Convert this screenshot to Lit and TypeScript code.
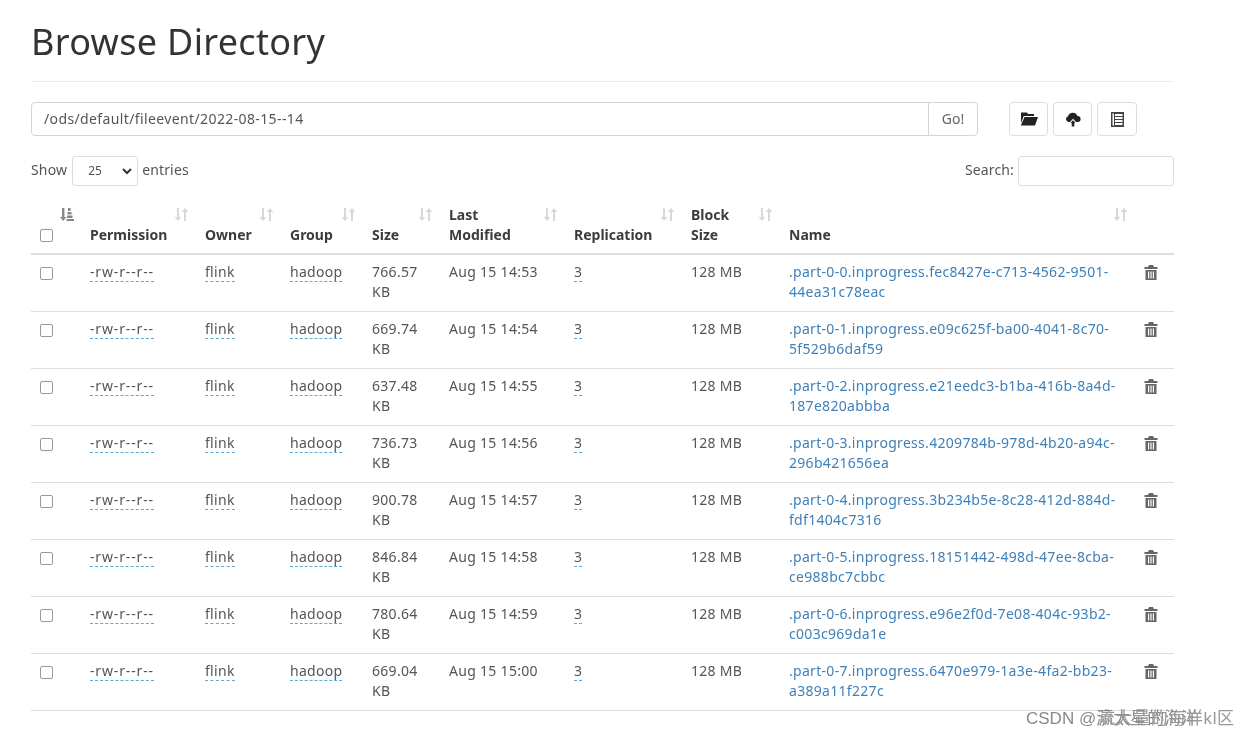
import { LitElement, html, css, svg } from "lit";
import { customElement } from "lit/decorators.js";

const rows = [
  ["766.57", "14:53", ".part-0-0.inprogress.fec8427e-c713-4562-9501-", "44ea31c78eac"],
  ["669.74", "14:54", ".part-0-1.inprogress.e09c625f-ba00-4041-8c70-", "5f529b6daf59"],
  ["637.48", "14:55", ".part-0-2.inprogress.e21eedc3-b1ba-416b-8a4d-", "187e820abbba"],
  ["736.73", "14:56", ".part-0-3.inprogress.4209784b-978d-4b20-a94c-", "296b421656ea"],
  ["900.78", "14:57", ".part-0-4.inprogress.3b234b5e-8c28-412d-884d-", "fdf1404c7316"],
  ["846.84", "14:58", ".part-0-5.inprogress.18151442-498d-47ee-8cba-", "ce988bc7cbbc"],
  ["780.64", "14:59", ".part-0-6.inprogress.e96e2f0d-7e08-404c-93b2-", "c003c969da1e"],
  ["669.04", "15:00", ".part-0-7.inprogress.6470e979-1a3e-4fa2-bb23-", "a389a11f227c"],
];

const sortIcon = svg`<path d="M3 0h2v9h2.400L4 13 .6 9H3zM10 13h2V4h2.400L11 0 7.600 4H10z"/>`;
const sortedIcon = svg`<path d="M3 0h2.400v9h2L4.200 13 1 9h2zM9 0h2.500v3H9zM8.500 4h4v2.500h-4zM8 7.500h5.500V10H8zM7.500 11H15v2H7.500z"/>`;

@customElement("app-root")
export class AppRoot extends LitElement {
  static styles = css`
    :host {
      display: block;
      position: relative;
      height: 737px;
      overflow: hidden;
      box-sizing: border-box;
      padding: 0 78px 0 31px;
      background: #fff;
      color: #555;
      font: 14px/20px "Noto Sans", "Open Sans", sans-serif;
      filter: blur(0.35px);
    }
    h1 {
      margin: 0;
      padding: 22px 0 19px;
      height: 40px;
      box-sizing: content-box;
      border-bottom: 1px solid #eee;
      font-size: 36px;
      line-height: 40px;
      font-weight: 400;
      letter-spacing: 0.32px;
      color: #333;
    }
    .path-row {
      display: flex;
      margin-top: 20px;
      height: 34px;
    }
    .path {
      flex: 1;
      box-sizing: border-box;
      border: 1px solid #d4d4d4;
      border-radius: 4px 0 0 4px;
      padding: 6px 12px;
      letter-spacing: 0.38px;
      color: #555;
    }
    .go {
      width: 50px;
      box-sizing: border-box;
      margin-left: -1px;
      border: 1px solid #d4d4d4;
      border-radius: 0 4px 4px 0;
      text-align: center;
      line-height: 32px;
      color: #666;
    }
    .tools {
      display: flex;
      gap: 5px;
      margin: 0 37px 0 31px;
    }
    .tool {
      display: flex;
      align-items: center;
      justify-content: center;
      width: 39px;
      box-sizing: border-box;
      border: 1px solid #ddd;
      border-radius: 4px;
    }
    .tool:last-child {
      width: 40px;
    }
    .tool svg {
      fill: #222;
    }
    .controls {
      display: flex;
      justify-content: space-between;
      align-items: center;
      margin-top: 20px;
      height: 30px;
    }
    .show,
    .search {
      display: flex;
      align-items: center;
      gap: 4px;
    }
    .label {
      padding-bottom: 3px;
      letter-spacing: 0.15px;
    }
    .select {
      display: flex;
      align-items: center;
      justify-content: space-between;
      box-sizing: border-box;
      width: 66px;
      height: 30px;
      margin-left: 1px;
      padding: 0 5px 0 15px;
      border: 1px solid #ddd;
      border-radius: 3px;
      font-size: 12px;
    }
    .search .box {
      width: 156px;
      height: 30px;
      box-sizing: border-box;
      border: 1px solid #ddd;
      border-radius: 3px;
    }
    table {
      width: 1143px;
      margin-top: 10px;
      table-layout: fixed;
      border-collapse: collapse;
    }
    .c0 { width: 51px; }
    .c1 { width: 115px; }
    .c2 { width: 85px; }
    .c3 { width: 82px; }
    .c4 { width: 77px; }
    .c5 { width: 125px; }
    .c6 { width: 117px; }
    .c7 { width: 98px; }
    .c8 { width: 355px; }
    .c9 { width: 38px; }
    th {
      position: relative;
      box-sizing: border-box;
      height: 58px;
      padding: 8px;
      text-align: left;
      vertical-align: bottom;
      font-weight: 700;
      color: #3c3c3c;
      border-bottom: 2px solid #ddd;
    }
    th svg.sort {
      position: absolute;
      top: 12px;
      right: 8px;
      fill: #d8d8d8;
    }
    th svg.sort.active {
      fill: #888;
    }
    td {
      padding: 7px 8px 9px;
      vertical-align: top;
      border-bottom: 1px solid #ddd;
      letter-spacing: 0.3px;
      overflow-wrap: anywhere;
    }
    input[type="checkbox"] {
      appearance: none;
      display: block;
      box-sizing: border-box;
      width: 13px;
      height: 13px;
      margin: 5px 0 3px 1px;
      border: 1.5px solid #999;
      border-radius: 2px;
      background: #fff;
    }
    th input[type="checkbox"] {
      margin: 3px 0 3px 1px;
    }
    .edit {
      border-bottom: 1px dashed #5aa9d6;
    }
    .perm {
      letter-spacing: 0.85px;
    }
    a {
      color: #4080b8;
      text-decoration: none;
    }
    .trash {
      display: block;
      fill: #666;
      margin: 3px 0 0 0;
    }
    .mark {
      position: absolute;
      left: 1026px;
      top: 709px;
      font: 17px/20px "Liberation Sans", "Noto Sans CJK SC", sans-serif;
      color: #888;
      white-space: nowrap;
    }
    .mark .ghost {
      position: absolute;
      left: 72px;
      top: 0;
      letter-spacing: 0.6px;
      color: #999;
    }
  `;

  private sort(active = false) {
    return html`<svg class="sort ${active ? "active" : ""}" width="15" height="13" viewBox="0 0 15 13">
      ${active ? sortedIcon : sortIcon}
    </svg>`;
  }

  private head(label: unknown, cls: string) {
    return html`<th class=${cls}>${label}${this.sort()}</th>`;
  }

  render() {
    return html`
      <h1>Browse Directory</h1>
      <div class="path-row">
        <div class="path">/ods/default/fileevent/2022-08-15--14</div>
        <div class="go">Go!</div>
        <div class="tools">
          <div class="tool">
            <svg width="18" height="14" viewBox="0 0 18 14">
              <path d="M1 3V.5h6L8 2h6v2H3.800L1 11zM4.500 5H18l-3 8.500H.8z" />
            </svg>
          </div>
          <div class="tool">
            <svg width="16" height="15" viewBox="0 0 16 15">
              <path d="M3.500 10A3 3 0 0 1 3 4.200 5 5 0 0 1 12.500 4 3 3 0 0 1 12.700 10H11L8 6.800 5 10zM6.700 14.500V11H5.500L8 8.300 10.500 11H9.300v3.500z" />
            </svg>
          </div>
          <div class="tool">
            <svg width="13" height="15" viewBox="0 0 13 15">
              <path d="M0 0h13v15H0zM1.500 1.500v12h1.500v-12zM4 2v2h7.500V2zM4 5v2h7.500V5zM4 8v2h7.500V8zM4 11v2h7.500v-2z" fill="#444" fill-rule="evenodd" />
            </svg>
          </div>
        </div>
      </div>
      <div class="controls">
        <div class="show">
          <span class="label">Show</span>
          <div class="select">
            25
            <svg width="10" height="7" viewBox="0 0 10 7">
              <path d="M1 1l4 4 4-4" fill="none" stroke="#333" stroke-width="2" />
            </svg>
          </div>
          <span class="label">entries</span>
        </div>
        <div class="search"><span class="label">Search:</span> <div class="box"></div></div>
      </div>
      <table>
        <thead>
          <tr>
            <th class="c0"><input type="checkbox" />${this.sort(true)}</th>
            ${this.head("Permission", "c1")}
            ${this.head("Owner", "c2")}
            ${this.head("Group", "c3")}
            ${this.head("Size", "c4")}
            ${this.head(html`Last<br />Modified`, "c5")}
            ${this.head("Replication", "c6")}
            ${this.head(html`Block<br />Size`, "c7")}
            ${this.head("Name", "c8")}
            <th class="c9"></th>
          </tr>
        </thead>
        <tbody>
          ${rows.map(
            ([size, time, name, tail]) => html`
              <tr>
                <td><input type="checkbox" /></td>
                <td><span class="edit perm">-rw-r--r--</span></td>
                <td><span class="edit">flink</span></td>
                <td><span class="edit">hadoop</span></td>
                <td>${size} KB</td>
                <td>Aug 15 ${time}</td>
                <td><span class="edit">3</span></td>
                <td>128 MB</td>
                <td><a>${name}<br />${tail}</a></td>
                <td>
                  <svg class="trash" width="14" height="15" viewBox="0 0 14 15">
                    <path d="M5 0h4l1 2h3.500v2H.5V2H4zM1.500 5h11v10h-11zM4 6.500v7h1.200v-7zM6.400 6.500v7h1.200v-7zM8.800 6.500v7H10v-7z" fill-rule="evenodd" />
                  </svg>
                </td>
              </tr>
            `
          )}
        </tbody>
      </table>
      <div class="mark">CSDN @瀛太星的海洋<span class="ghost">流大量的海样kl区</span></div>
    `;
  }
}
